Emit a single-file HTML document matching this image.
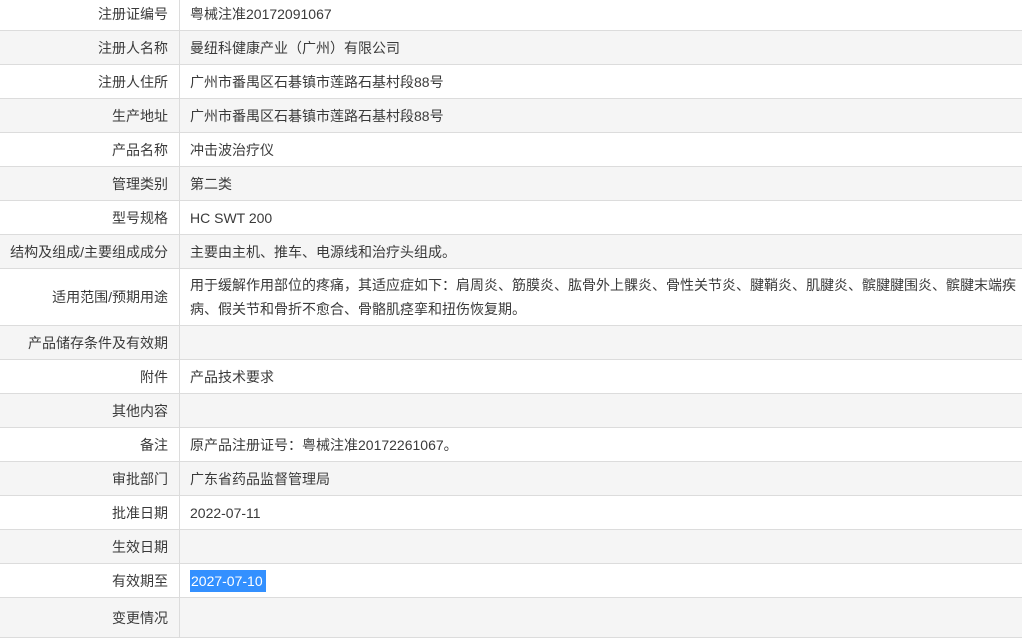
<!DOCTYPE html><html><head><meta charset="utf-8"><style>
body{margin:0;width:1022px;height:612px;overflow:hidden;background:#fff;font-family:"Liberation Sans","Noto Sans CJK SC",sans-serif;font-size:14px;color:#3a3a3a}
.r{position:absolute;left:0;width:1022px;border-bottom:1px solid #dcdcdc;box-sizing:border-box}
.r.g{background:#f5f5f5}
.l{position:absolute;left:0;top:0;bottom:0;width:180px;border-right:1px solid #dcdcdc;text-align:right;box-sizing:border-box;padding-right:11px;display:flex;align-items:center;justify-content:flex-end}
.v{position:absolute;left:190px;right:6px;top:0;bottom:0;display:flex;align-items:center;line-height:24px}
.sel{background:#3390ff;color:#fff;padding:2px 3px 2px 1px;line-height:18px}
</style></head><body>
<div class="r" style="top:-3px;height:34px"><div class="l">注册证编号</div><div class="v">粤械注准20172091067</div></div>
<div class="r g" style="top:31px;height:34px"><div class="l">注册人名称</div><div class="v">曼纽科健康产业（广州）有限公司</div></div>
<div class="r" style="top:65px;height:34px"><div class="l">注册人住所</div><div class="v">广州市番禺区石碁镇市莲路石基村段88号</div></div>
<div class="r g" style="top:99px;height:34px"><div class="l">生产地址</div><div class="v">广州市番禺区石碁镇市莲路石基村段88号</div></div>
<div class="r" style="top:133px;height:34px"><div class="l">产品名称</div><div class="v">冲击波治疗仪</div></div>
<div class="r g" style="top:167px;height:34px"><div class="l">管理类别</div><div class="v">第二类</div></div>
<div class="r" style="top:201px;height:34px"><div class="l">型号规格</div><div class="v">HC SWT 200</div></div>
<div class="r g" style="top:235px;height:34px"><div class="l">结构及组成/主要组成成分</div><div class="v">主要由主机、推车、电源线和治疗头组成。</div></div>
<div class="r" style="top:269px;height:57px"><div class="l">适用范围/预期用途</div><div class="v">用于缓解作用部位的疼痛，其适应症如下：肩周炎、筋膜炎、肱骨外上髁炎、骨性关节炎、腱鞘炎、肌腱炎、髌腱腱围炎、髌腱末端疾病、假关节和骨折不愈合、骨骼肌痉挛和扭伤恢复期。</div></div>
<div class="r g" style="top:326px;height:34px"><div class="l">产品储存条件及有效期</div><div class="v"></div></div>
<div class="r" style="top:360px;height:34px"><div class="l">附件</div><div class="v">产品技术要求</div></div>
<div class="r g" style="top:394px;height:34px"><div class="l">其他内容</div><div class="v"></div></div>
<div class="r" style="top:428px;height:34px"><div class="l">备注</div><div class="v">原产品注册证号：粤械注准20172261067。</div></div>
<div class="r g" style="top:462px;height:34px"><div class="l">审批部门</div><div class="v">广东省药品监督管理局</div></div>
<div class="r" style="top:496px;height:34px"><div class="l">批准日期</div><div class="v">2022-07-11</div></div>
<div class="r g" style="top:530px;height:34px"><div class="l">生效日期</div><div class="v"></div></div>
<div class="r" style="top:564px;height:34px"><div class="l">有效期至</div><div class="v"><span class="sel">2027-07-10</span></div></div>
<div class="r g" style="top:598px;height:40px"><div class="l">变更情况</div><div class="v"></div></div>
</body></html>
